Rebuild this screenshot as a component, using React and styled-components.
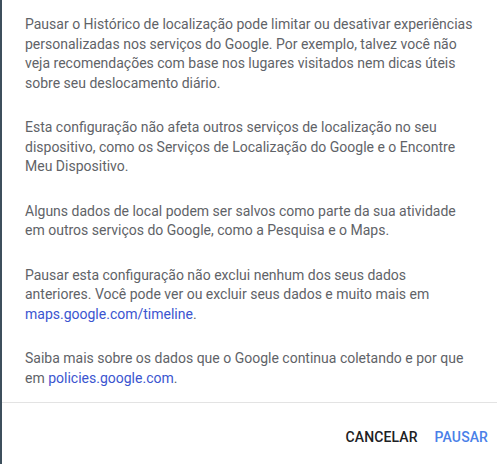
import React from "react";
import styled, { createGlobalStyle } from "styled-components";

const GlobalStyle = createGlobalStyle`
  html, body {
    margin: 0;
    padding: 0;
    background: #ffffff;
  }
  body {
    font-family: Roboto, "Noto Sans", Arial, sans-serif;
  }
`;

const Page = styled.div`
  display: flex;
  width: 497px;
  height: 464px;
  background: #3d4f5c;
  overflow: hidden;
`;

const Dialog = styled.div`
  flex: 1;
  margin-left: 2px;
  display: flex;
  flex-direction: column;
  background: #ffffff;
`;

const Body = styled.div`
  padding: 15px 24px 14px 23px;
`;

const Para = styled.p`
  margin: 0 0 25px;
  font-size: 14px;
  line-height: 19.5px;
  color: #5f6368;
  &:last-child {
    margin-bottom: 0;
  }
`;

const LinkText = styled.a`
  color: #3b55d0;
  text-decoration: none;
`;

const Divider = styled.hr`
  margin: 0;
  border: none;
  border-top: 1px solid #e3e3e3;
`;

const Actions = styled.div`
  flex: 1;
  display: flex;
  justify-content: flex-end;
  align-items: center;
  gap: 17px;
  padding: 7px 9px 0 0;
`;

const Button = styled.button`
  border: none;
  background: none;
  padding: 0;
  font-family: Roboto, Arial, sans-serif;
  font-size: 14px;
  font-weight: 500;
  letter-spacing: 0.1px;
  text-transform: uppercase;
  color: ${(p) => (p.$primary ? "#4a80e8" : "#202124")};
  cursor: pointer;
`;

export default function App() {
  return (
    <>
      <GlobalStyle />
      <Page>
        <Dialog>
          <Body>
            <Para>
              Pausar o Histórico de localização pode limitar ou desativar
              experiências personalizadas nos serviços do Google. Por exemplo,
              talvez você não veja recomendações com base nos lugares visitados
              nem dicas úteis sobre seu deslocamento diário.
            </Para>
            <Para>
              Esta configuração não afeta outros serviços de localização no seu
              dispositivo, como os Serviços de Localização do Google e o
              Encontre Meu Dispositivo.
            </Para>
            <Para>
              Alguns dados de local podem ser salvos como parte da sua atividade
              em outros serviços do Google, como a Pesquisa e o Maps.
            </Para>
            <Para>
              Pausar esta configuração não exclui nenhum dos seus dados
              anteriores. Você pode ver ou excluir seus dados e muito mais em{" "}
              <LinkText href="#">maps.google.com/timeline</LinkText>.
            </Para>
            <Para>
              Saiba mais sobre os dados que o Google continua coletando e por
              que em <LinkText href="#">policies.google.com</LinkText>.
            </Para>
          </Body>
          <Divider />
          <Actions>
            <Button>Cancelar</Button>
            <Button $primary>Pausar</Button>
          </Actions>
        </Dialog>
      </Page>
    </>
  );
}
